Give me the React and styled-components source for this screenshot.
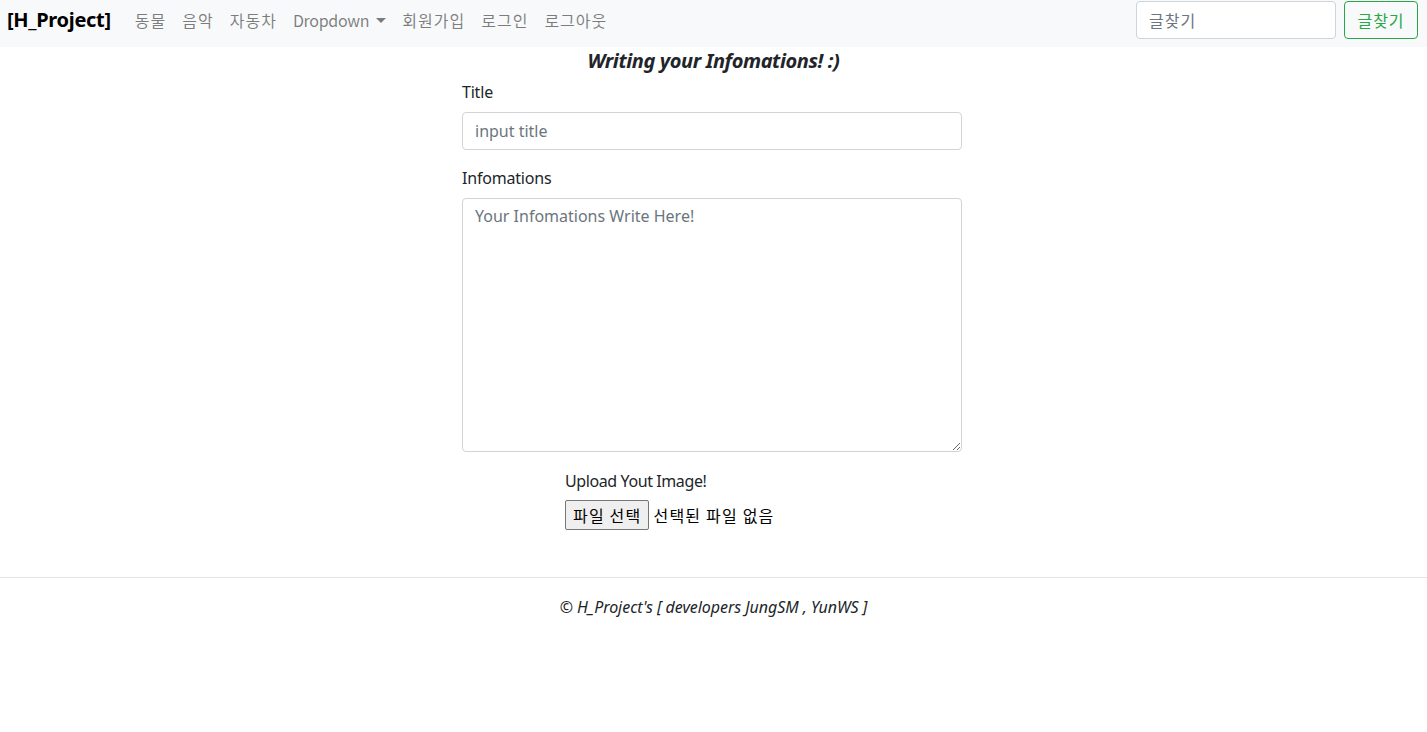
import React from "react";
import styled, { createGlobalStyle } from "styled-components";

const Global = createGlobalStyle`
  html, body { margin: 0; padding: 0; background: #fff; }
  body {
    font-family: "Noto Sans", "Noto Sans CJK KR", sans-serif;
    color: #212529;
    font-size: 16px;
  }
  * { box-sizing: border-box; }
`;

const Nav = styled.nav`
  display: flex;
  align-items: flex-start;
  height: 47px;
  background: #f8f9fa;
  padding: 1px 9px 0 7px;
`;

const Brand = styled.a`
  font-size: 20px;
  font-weight: 700;
  color: #000;
  margin-top: 5px;
  margin-right: 16px;
  letter-spacing: -0.3px;
  font-family: "Noto Sans", sans-serif;
`;

const Links = styled.ul`
  display: flex;
  list-style: none;
  margin: 0;
  padding: 0;
  flex: 1;
  margin-top: 7px;
`;

const LinkItem = styled.li`
  padding: 0 8px;
  font-size: 16px;
  color: rgba(0, 0, 0, 0.5);
  font-family: "Noto Sans CJK KR", "Noto Sans", sans-serif;
  letter-spacing: ${(p) => (p.$latin ? "-0.3px" : "1px")};
  display: flex;
  align-items: center;
  line-height: 24px;
`;

const Caret = styled.span`
  display: inline-block;
  margin-left: 7px;
  border-top: 5px solid rgba(0, 0, 0, 0.5);
  border-left: 5px solid transparent;
  border-right: 5px solid transparent;
`;

const SearchForm = styled.form`
  display: flex;
  gap: 8px;
`;

const SearchInput = styled.input`
  width: 200px;
  height: 38px;
  border: 1px solid #ced4da;
  border-radius: 4px;
  padding: 6px 12px;
  font-size: 16px;
  font-family: "Noto Sans CJK KR", sans-serif;
  letter-spacing: 1px;
  color: #495057;
  &::placeholder { color: #6c757d; }
`;

const OutlineButton = styled.button`
  height: 38px;
  width: 74px;
  border: 1px solid #28a745;
  background: transparent;
  color: #28a745;
  border-radius: 4px;
  font-size: 16px;
  font-family: "Noto Sans CJK KR", sans-serif;
  letter-spacing: 1px;
  padding: 0;
`;

const Heading = styled.h3`
  margin: 0;
  padding-top: 1px;
  text-align: center;
  font-size: 20px;
  font-style: italic;
  font-weight: 700;
  line-height: 26px;
  font-family: "Noto Sans", sans-serif;
  letter-spacing: -0.4px;
`;

const Form = styled.form`
  width: 500px;
  margin-left: calc(50% - 251.5px);
  display: flex;
  flex-direction: column;
`;

const Group = styled.div`
  display: flex;
  flex-direction: column;
  margin-top: ${(p) => p.$top || 0}px;
`;

const Label = styled.label`
  font-size: 16px;
  line-height: 24px;
  margin-bottom: 8px;
  font-family: "Noto Sans", sans-serif;
  letter-spacing: -0.2px;
`;

const TextInput = styled.input`
  height: 38px;
  border: 1px solid #ced4da;
  border-radius: 4px;
  padding: 6px 12px;
  font-size: 16px;
  font-family: "Noto Sans", sans-serif;
  &::placeholder { color: #6c757d; }
`;

const TextArea = styled.textarea`
  height: 254px;
  border: 1px solid #ced4da;
  border-radius: 4px;
  padding: 6px 12px;
  font-size: 16px;
  font-family: "Noto Sans", sans-serif;
  resize: vertical;
  &::placeholder { color: #6c757d; }
`;

const Upload = styled.div`
  margin-top: 17px;
  padding-left: 103px;
  display: flex;
  flex-direction: column;
`;

const UploadLabel = styled.div`
  font-size: 16px;
  line-height: 24px;
  font-family: "Noto Sans", sans-serif;
  letter-spacing: -0.4px;
`;

const FileRow = styled.div`
  display: flex;
  align-items: center;
  margin-top: 7px;
  font-family: "Noto Sans CJK KR", sans-serif;
  font-size: 16px;
  letter-spacing: 1.2px;
  color: #000;
`;

const FileButton = styled.button`
  height: 30px;
  padding: 0 7px;
  border: 1px solid #767676;
  border-radius: 2px;
  background: #efefef;
  font-family: "Noto Sans CJK KR", sans-serif;
  font-size: 16px;
  letter-spacing: 1.2px;
  color: #000;
  margin-right: 4px;
`;

const Rule = styled.hr`
  margin: 47px 0 0;
  border: 0;
  border-top: 1px solid rgba(0, 0, 0, 0.1);
`;

const Footer = styled.footer`
  text-align: center;
  padding-top: 18px;
  font-style: italic;
  font-size: 16px;
  font-family: "Noto Sans", sans-serif;
  letter-spacing: -0.05px;
`;

export default function App() {
  return (
    <>
      <Global />
      <Nav>
        <Brand>[H_Project]</Brand>
        <Links>
          <LinkItem>동물</LinkItem>
          <LinkItem>음악</LinkItem>
          <LinkItem>자동차</LinkItem>
          <LinkItem $latin>
            Dropdown<Caret />
          </LinkItem>
          <LinkItem>회원가입</LinkItem>
          <LinkItem>로그인</LinkItem>
          <LinkItem>로그아웃</LinkItem>
        </Links>
        <SearchForm onSubmit={(e) => e.preventDefault()}>
          <SearchInput placeholder="글찾기" />
          <OutlineButton type="button">글찾기</OutlineButton>
        </SearchForm>
      </Nav>
      <Heading>Writing your Infomations! :)</Heading>
      <Form onSubmit={(e) => e.preventDefault()}>
        <Group $top={6}>
          <Label>Title</Label>
          <TextInput placeholder="input title" />
        </Group>
        <Group $top={16}>
          <Label>Infomations</Label>
          <TextArea placeholder="Your Infomations Write Here!" />
        </Group>
        <Upload>
          <UploadLabel>Upload Yout Image!</UploadLabel>
          <FileRow>
            <FileButton type="button">파일 선택</FileButton>
            선택된 파일 없음
          </FileRow>
        </Upload>
      </Form>
      <Rule />
      <Footer>© H_Project's [ developers JungSM , YunWS ]</Footer>
    </>
  );
}
